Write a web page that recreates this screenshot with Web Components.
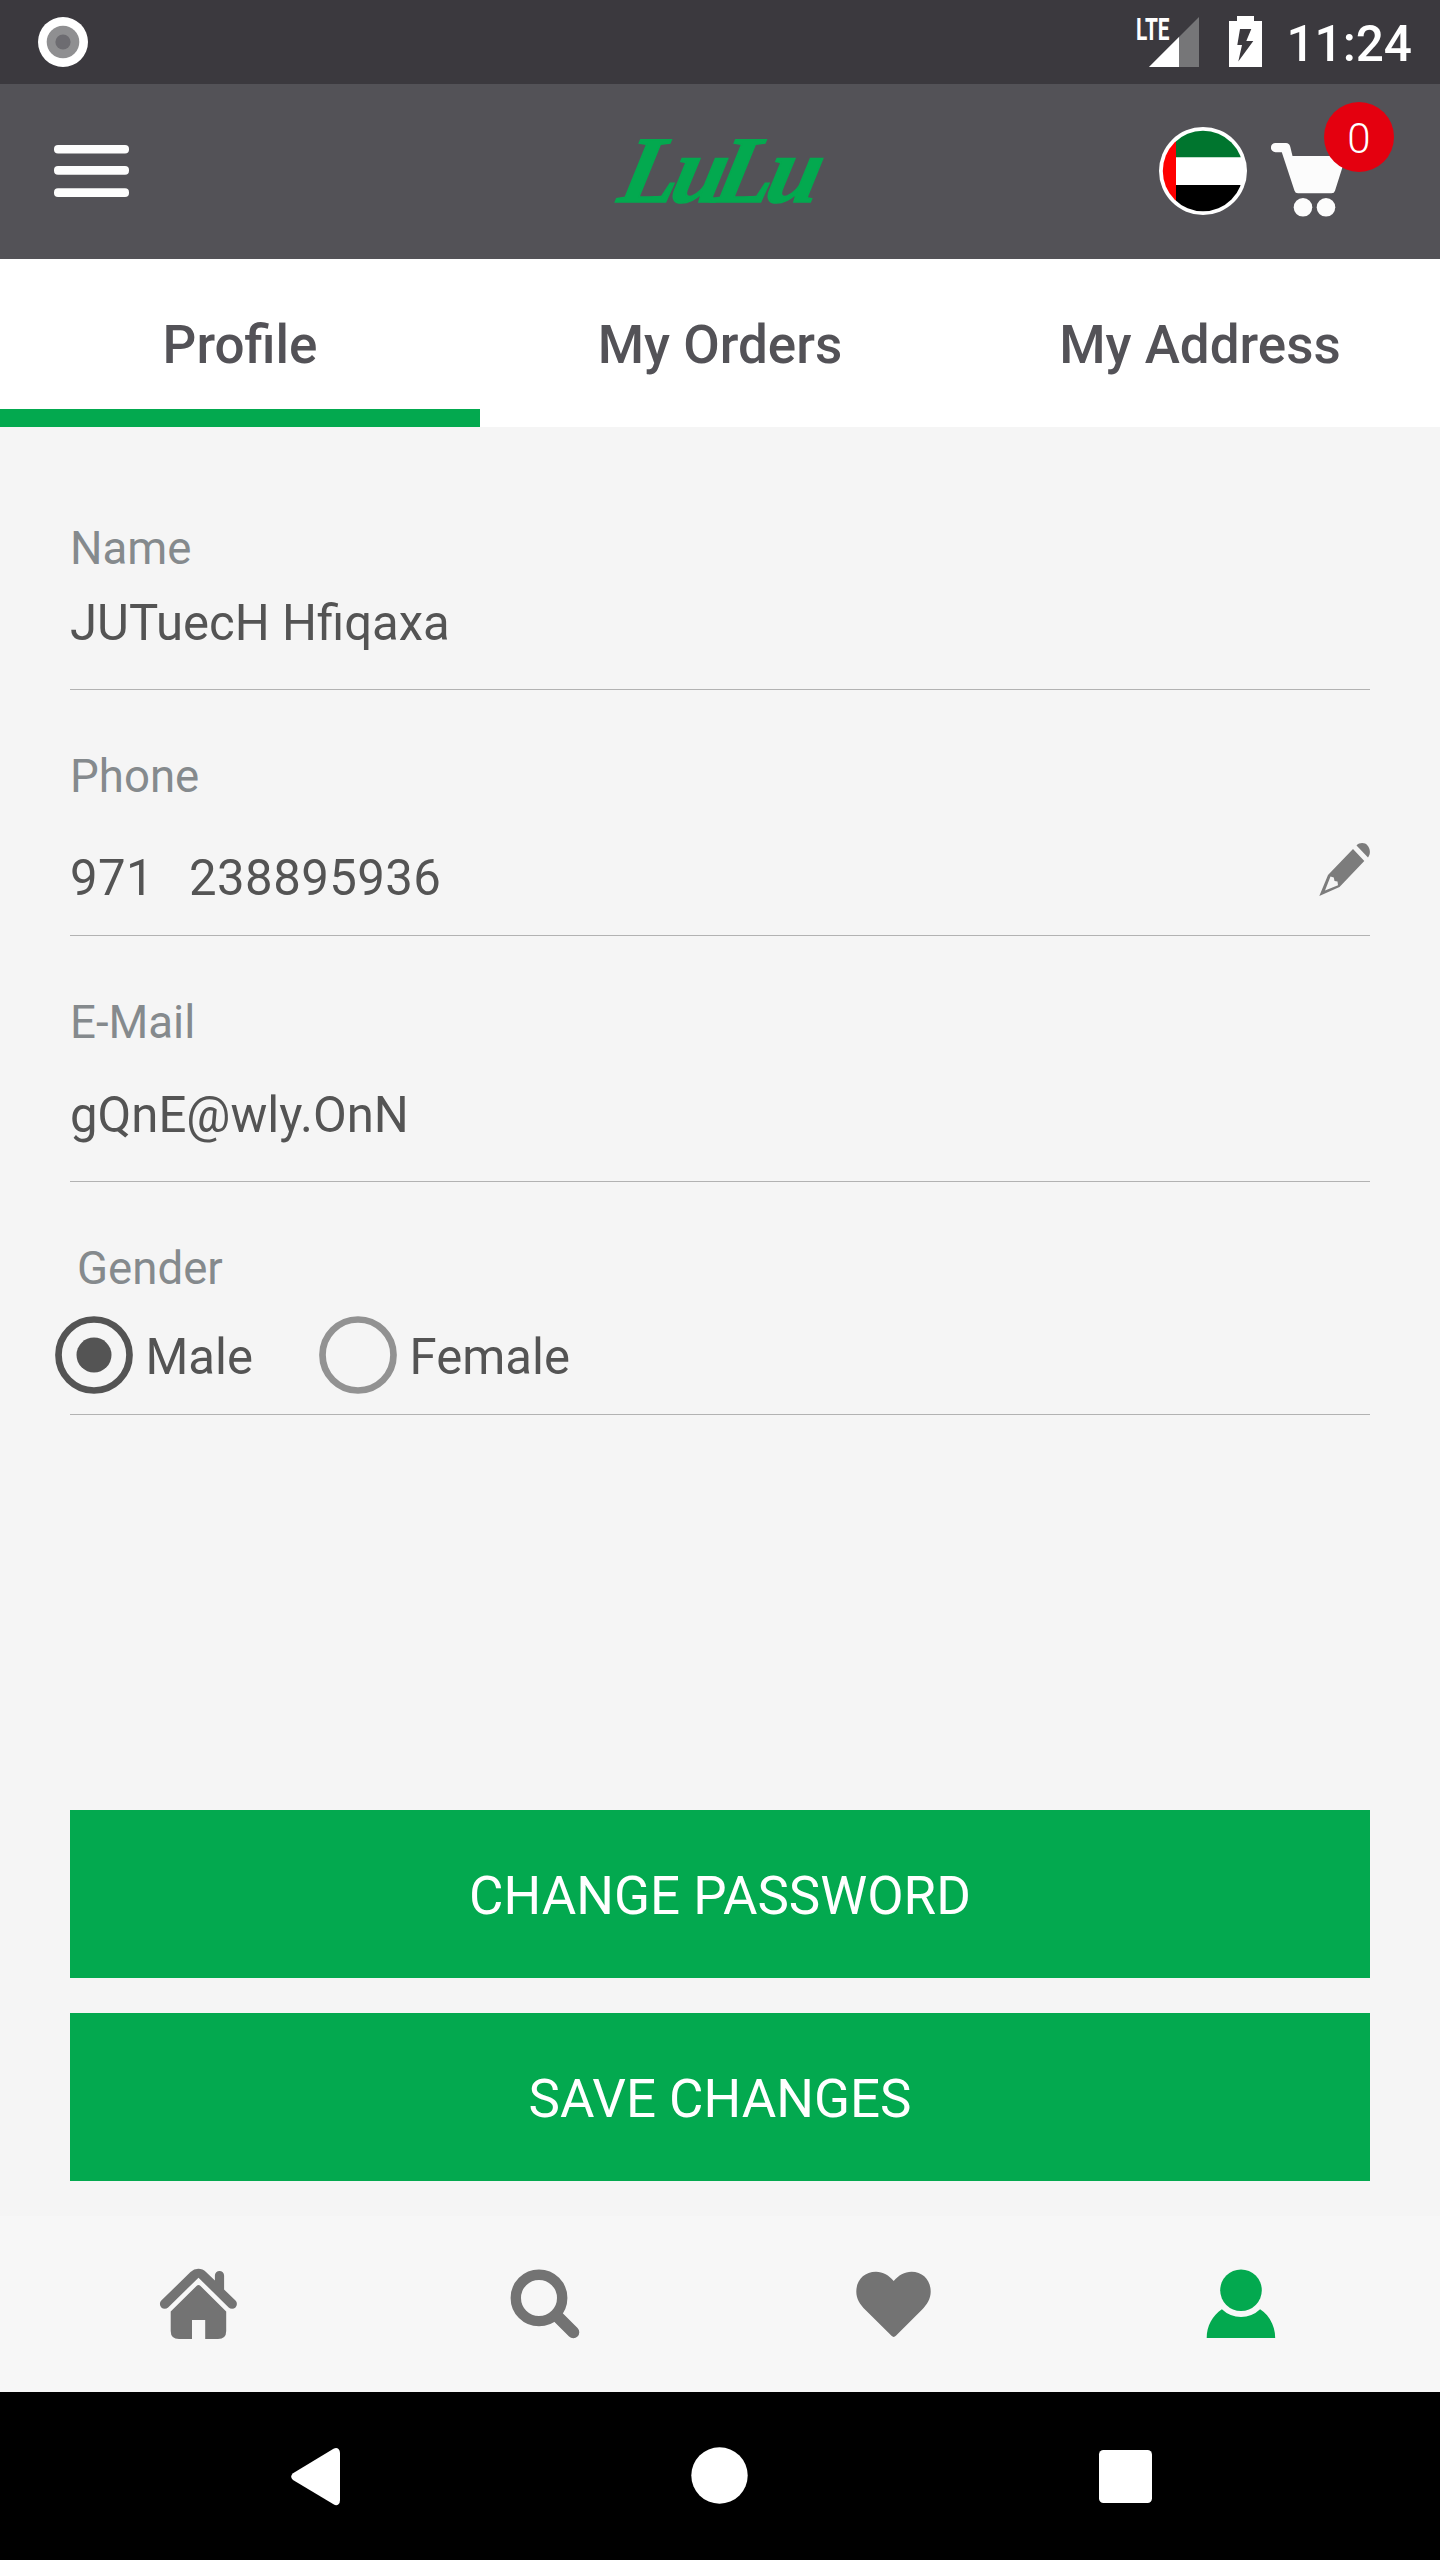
<!DOCTYPE html>
<html lang="en">
<head>
<meta charset="utf-8">
<title>Profile</title>
<style>
html, body { margin: 0; padding: 0; }
body { width: 1440px; height: 2560px; overflow: hidden; font-family: Roboto, "Noto Sans", sans-serif; background: #f5f5f5; }
</style>
</head>
<body>
<profile-screen></profile-screen>
<script>
const define = (name, html) => {
  const template = document.createElement('template');
  template.innerHTML = html;
  customElements.define(name, class extends HTMLElement {
    constructor() {
      super();
      this.attachShadow({ mode: 'open' }).append(template.content.cloneNode(true));
    }
  });
};

define('status-bar', `
<style>
:host { display: flex; height: 84px; background: #3b393e; color: #fff; align-items: center; justify-content: space-between; padding: 0 28px 0 38px; box-sizing: border-box; }
svg { display: block; }
.right { display: flex; align-items: center; }
.time { font-size: 49.5px; font-weight: 500; line-height: 84px; height: 84px; padding-top: 2px; box-sizing: border-box; margin-left: 24px; }
</style>
<svg width="50" height="84" viewBox="38 0 50 84"><circle cx="63" cy="42" r="25" fill="#fff"/><circle cx="63" cy="42" r="16.3" fill="#8f8f91"/><circle cx="63" cy="42" r="7.6" fill="#6d6c71"/></svg>
<div class="right">
<svg width="127" height="84" viewBox="1135 0 127 84">
<path d="M1149 67L1199 17V67Z" fill="#767678"/><path d="M1149 67L1179 37V67Z" fill="#fff"/>
<text x="1136" y="39.7" font-family="Roboto, sans-serif" font-weight="700" font-size="30.5" textLength="33.5" lengthAdjust="spacingAndGlyphs" fill="#fff">LTE</text>
<path fill="#fff" fill-rule="evenodd" d="M1237 16H1254V21H1262V67H1229V21H1237ZM1240 29L1237.3 45H1242L1238.3 61.5L1253.3 41H1246.3L1251.3 29Z"/>
</svg>
<div class="time">11:24</div>
</div>`);

define('lulu-logo', `
<style>:host { display: block; } svg { display: block; overflow: visible; }</style>
<svg width="208" height="175" viewBox="616 84 208 175" fill="#03a94f" stroke="#03a94f" stroke-width="1.5">
<g transform="translate(0 202) skewX(-13)">
<text x="616 668 711 763" y="0" font-family="Liberation Serif, serif" font-weight="700" font-style="italic" font-size="95">LuLu</text>
</g>
</svg>`);

define('cart-button', `
<style>
:host { display: block; position: relative; width: 123px; height: 175px; }
svg { display: block; }
.badge { position: absolute; right: 0; top: 18px; width: 70px; height: 70px; border-radius: 50%; background: #e4000f; color: #fff; font-size: 42px; font-weight: 300; line-height: 73px; text-align: center; }
</style>
<svg width="80" height="175" viewBox="1271 84 80 175" fill="#fcfcfc"><path d="M1275.5 143H1286Q1289.300 143 1290.200 146.500L1292.500 156H1346L1335 190.800Q1334.300 193.300 1331.500 193.300H1298Q1295.300 193.300 1294.500 190.800L1281.800 152.200H1275.500A4.600 4.600 0 0 1 1275.500 143Z"/><circle cx="1303" cy="207.300" r="9.300"/><circle cx="1326" cy="207.300" r="9.300"/></svg>
<div class="badge"><slot></slot></div>`);

define('app-header', `
<style>
:host { display: grid; grid-template-columns: 1fr auto 1fr; height: 175px; background: #535257; padding: 0 46px 0 54px; box-sizing: border-box; }
lulu-logo { margin-left: -8px; }
svg { display: block; }
.actions { display: flex; justify-content: flex-end; gap: 24px; }
</style>
<svg width="75" height="175" viewBox="54 84 75 175" fill="#fdfdfd"><rect x="54" y="145" width="75" height="8.500" rx="4"/><rect x="54" y="166" width="75" height="8.700" rx="4"/><rect x="54" y="188.300" width="75" height="8.700" rx="4"/></svg>
<lulu-logo></lulu-logo>
<div class="actions">
<svg width="88" height="175" viewBox="1159 84 88 175"><clipPath id="c"><circle cx="1203" cy="171" r="40.200"/></clipPath><circle cx="1203" cy="171" r="44" fill="#fff"/><g clip-path="url(#c)"><path fill="#fff" d="M1159 127h88v88h-88z"/><path fill="#00752e" d="M1176 127h71v30.300h-71z"/><path d="M1176 185h71v30h-71z"/><path fill="#f00" d="M1159 127h17v88h-17z"/></g></svg>
<cart-button>0</cart-button>
</div>`);

define('tab-item', `
<style>
:host { display: block; flex: 1; height: 168px; box-sizing: border-box; padding-top: 2px; text-align: center; font-size: 53px; font-weight: 500; line-height: 168px; color: #535257; }
:host([active]) { box-shadow: inset 0 -18px 0 #03a94f; }
</style><slot></slot>`);

define('tab-bar', `<style>:host { display: flex; background: #fff; height: 168px; }</style><slot></slot>`);

define('profile-field', `
<style>
:host { display: flex; flex-direction: column; border-bottom: 1px solid #b2b2b2; padding-bottom: var(--end, 36px); margin-bottom: 58px; }
.label { font-size: 45.6px; line-height: 57px; height: 56px; color: #858a8d; }
.value { display: flex; justify-content: space-between; margin-top: var(--gap, 17px); font-size: 49.1px; line-height: 61px; height: var(--h, 60px); color: #545454; white-space: pre; }
</style>
<div class="label"><slot name="label"></slot></div>
<div class="value"><slot></slot></div>`);

define('pencil-icon', `
<style>:host { display: block; white-space: normal; } svg { display: block; }</style>
<svg width="51" height="60" viewBox="1319 848 51 60" fill="#7c7c7c" style="overflow:visible"><path fill-rule="evenodd" d="M1319.300 896L1328 875L1353 849L1364.300 861L1339.500 887ZM1330.500 876.500L1325 890.500L1338 885.300L1337.500 881.500L1334.500 881L1333.800 877.500Z"/><path d="M1356.500 845.500C1359.500 842.300 1365 842.300 1367.500 845.500C1370.300 848.800 1371 854 1368 857.500Z"/></svg>`);

define('radio-option', `
<style>
:host { display: flex; height: 78px; line-height: 83px; color: #545454; white-space: normal; }
svg { display: block; margin-right: 13px; }
.dot { display: none; }
svg { color: #929292; }
:host([checked]) svg { color: #545454; }
:host([checked]) .dot { display: block; }
</style>
<svg width="78" height="78" viewBox="0 0 78 78"><circle cx="39" cy="39" r="35.500" fill="none" stroke="currentColor" stroke-width="6.700"/><circle class="dot" cx="39" cy="39" r="17.500" fill="currentColor"/></svg>
<slot></slot>`);

define('action-button', `
<style>:host { display: block; height: 168px; box-sizing: border-box; padding-top: 2px; background: #03a94f; color: #fff; font-size: 52.9px; line-height: 168px; text-align: center; }</style><slot></slot>`);

define('bottom-nav', `
<style>
:host { display: flex; height: 176px; background: #f7f7f7; padding: 0 24px; color: #737373; }
div { flex: 1; display: flex; justify-content: center; }
svg { display: block; fill: currentColor; }
.active { color: #03a94f; }
</style>
<div><svg width="100" height="176" viewBox="148 2216 100 176"><path d="M161.300 2300.600L190.500 2272Q194 2268.700 198.300 2268.700Q202.700 2268.700 206 2272L214.900 2280.500V2275.500A4.600 4.600 0 0 1 224.100 2275.500V2289.500L235.500 2300.600A4.800 4.800 0 0 1 228.700 2307.400L198.500 2277.700L168.100 2307.400A4.800 4.800 0 0 1 161.300 2300.600Z"/><path d="M170.700 2311.500L196.500 2286Q198.500 2284.200 200.500 2286L226.200 2311.500V2331Q226.200 2339 218 2339H205.200V2320H192V2339H179Q170.700 2339 170.700 2331Z"/></svg></div>
<div><svg width="100" height="176" viewBox="496 2216 100 176"><circle cx="539" cy="2297.900" r="23.200" fill="none" stroke="currentColor" stroke-width="10.400"/><path d="M557 2316L573.300 2332.300" stroke="currentColor" stroke-width="12" stroke-linecap="round"/></svg></div>
<div><svg width="100" height="176" viewBox="844 2216 100 176"><path d="M893.700 2281C889 2275.500 883 2271.800 876 2271.800C864 2271.800 856.300 2280.500 856.300 2291.500C856.300 2299 860 2304.500 865.500 2310L891.500 2335.800Q893.700 2338 895.900 2335.800L921.700 2310C927 2304.500 930.700 2299 930.700 2291.500C930.700 2280.500 923 2271.800 911.500 2271.800C904.500 2271.800 898.500 2275.500 893.700 2281Z"/></svg></div>
<div class="active"><svg width="100" height="176" viewBox="1192 2216 100 176"><circle cx="1241" cy="2290.300" r="20.800"/><path d="M1206.700 2338C1206.700 2326 1212.500 2315.500 1221.900 2309.300A27.500 27.500 0 0 0 1260.100 2309.300C1269.500 2315.500 1275.200 2326 1275.200 2338Z"/></svg></div>`);

define('system-nav', `
<style>
:host { display: flex; justify-content: space-between; height: 168px; padding: 0 265px; background: #000; }
svg { display: block; fill: #fff; }
</style>
<svg width="100" height="168" viewBox="265 2392 100 168"><path d="M293 2473.300L333.500 2448.800Q336.500 2447.200 338.500 2449Q340 2450.500 340 2453V2500Q340 2503 338.500 2504.300Q336.500 2506 333.500 2504.300L293 2480Q289.300 2476.700 293 2473.300Z"/></svg>
<svg width="100" height="168" viewBox="670 2392 100 168"><circle cx="719.500" cy="2475.500" r="28.200"/></svg>
<svg width="100" height="168" viewBox="1075 2392 100 168"><rect x="1099" y="2450" width="53" height="53" rx="4.500"/></svg>`);

define('profile-screen', `
<style>
:host { display: flex; flex-direction: column; width: 1440px; height: 2560px; }
main { flex: 1; display: flex; flex-direction: column; padding: 93px 70px 35px; }
.number { letter-spacing: .45px; word-spacing: -1px; }
.gender { --gap: 20px; --h: 78px; --end: 20px; margin-bottom: 0; }
.gender [slot=label] { padding-left: 7px; }
.radios { display: flex; gap: 65.500px; margin-left: -15.500px; }
.buttons { display: flex; flex-direction: column; gap: 35px; margin-top: auto; }
</style>
<status-bar></status-bar>
<app-header></app-header>
<tab-bar><tab-item active>Profile</tab-item><tab-item>My Orders</tab-item><tab-item>My Address</tab-item></tab-bar>
<main>
<profile-field><span slot="label">Name</span><span>JUTuecH Hfiqaxa</span></profile-field>
<profile-field style="--gap:44px;--end:27px"><span slot="label">Phone</span><span class="number">971   238895936</span><pencil-icon></pencil-icon></profile-field>
<profile-field style="--gap:35px"><span slot="label">E-Mail</span><span>gQnE@wly.OnN</span></profile-field>
<profile-field class="gender"><span slot="label">Gender</span><div class="radios"><radio-option checked>Male</radio-option><radio-option>Female</radio-option></div></profile-field>
<div class="buttons"><action-button>CHANGE PASSWORD</action-button><action-button>SAVE CHANGES</action-button></div>
</main>
<bottom-nav></bottom-nav>
<system-nav></system-nav>`);
</script>
</body>
</html>
